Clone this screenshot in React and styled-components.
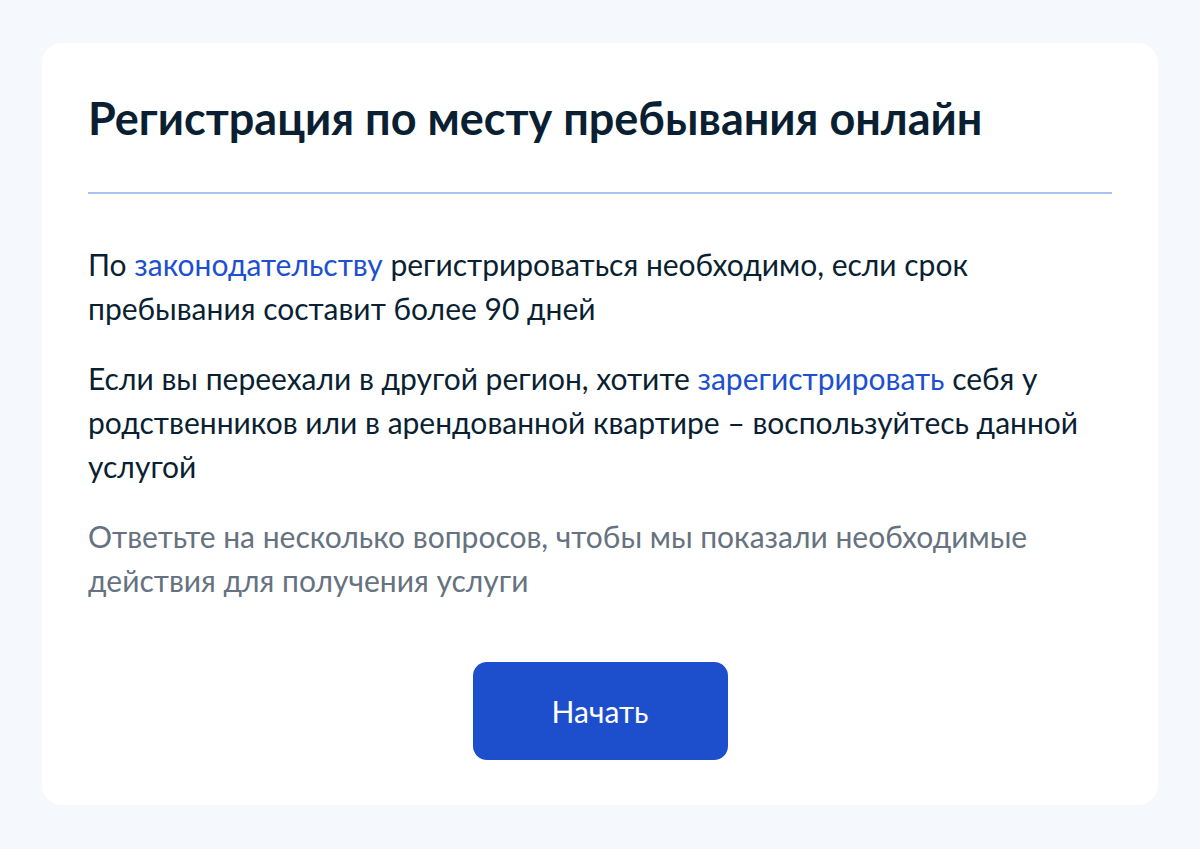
import React from "react";
import styled, { createGlobalStyle } from "styled-components";

const GlobalStyle = createGlobalStyle`
  html, body {
    margin: 0;
    padding: 0;
    background: #f5f8fd;
  }
  body {
    font-family: Lato, "Noto Sans", sans-serif;
    color: #0b1f33;
  }
`;

const Page = styled.div`
  min-height: 849px;
  padding: 43px 42px 44px;
  box-sizing: border-box;
`;

const Card = styled.section`
  background: #ffffff;
  border-radius: 20px;
  padding: 48px 46px 45px;
  display: flex;
  flex-direction: column;
`;

const Title = styled.h1`
  margin: 0;
  font-size: 45px;
  line-height: 54px;
  font-weight: 700;
  color: #0b1f33;
`;

const Divider = styled.div`
  height: 2px;
  background: #aac2f2;
  margin: 47px 0 48px;
`;

const Text = styled.p`
  margin: 0 0 26px;
  font-size: 30px;
  line-height: 44px;
  color: ${(p) => (p.$muted ? "#66727f" : "#0b1f33")};
`;

const Link = styled.a`
  color: #1d4fd0;
  text-decoration: none;
`;

const Actions = styled.div`
  display: flex;
  justify-content: center;
  margin-top: 34px;
`;

const Button = styled.button`
  width: 255px;
  height: 98px;
  border: none;
  border-radius: 14px;
  background: #1d4fcd;
  color: #ffffff;
  font-family: Lato, "Noto Sans", sans-serif;
  font-size: 30px;
  cursor: pointer;
`;

export default function App() {
  return (
    <Page>
      <GlobalStyle />
      <Card>
        <Title>Регистрация по месту пребывания онлайн</Title>
        <Divider />
        <Text>
          По <Link href="#">законодательству</Link> регистрироваться необходимо, если срок
          пребывания составит более 90 дней
        </Text>
        <Text>
          Если вы переехали в другой регион, хотите{" "}
          <Link href="#">зарегистрировать</Link> себя у родственников или в арендованной
          квартире – воспользуйтесь данной услугой
        </Text>
        <Text $muted>
          Ответьте на несколько вопросов, чтобы мы показали необходимые действия для
          получения услуги
        </Text>
        <Actions>
          <Button>Начать</Button>
        </Actions>
      </Card>
    </Page>
  );
}
